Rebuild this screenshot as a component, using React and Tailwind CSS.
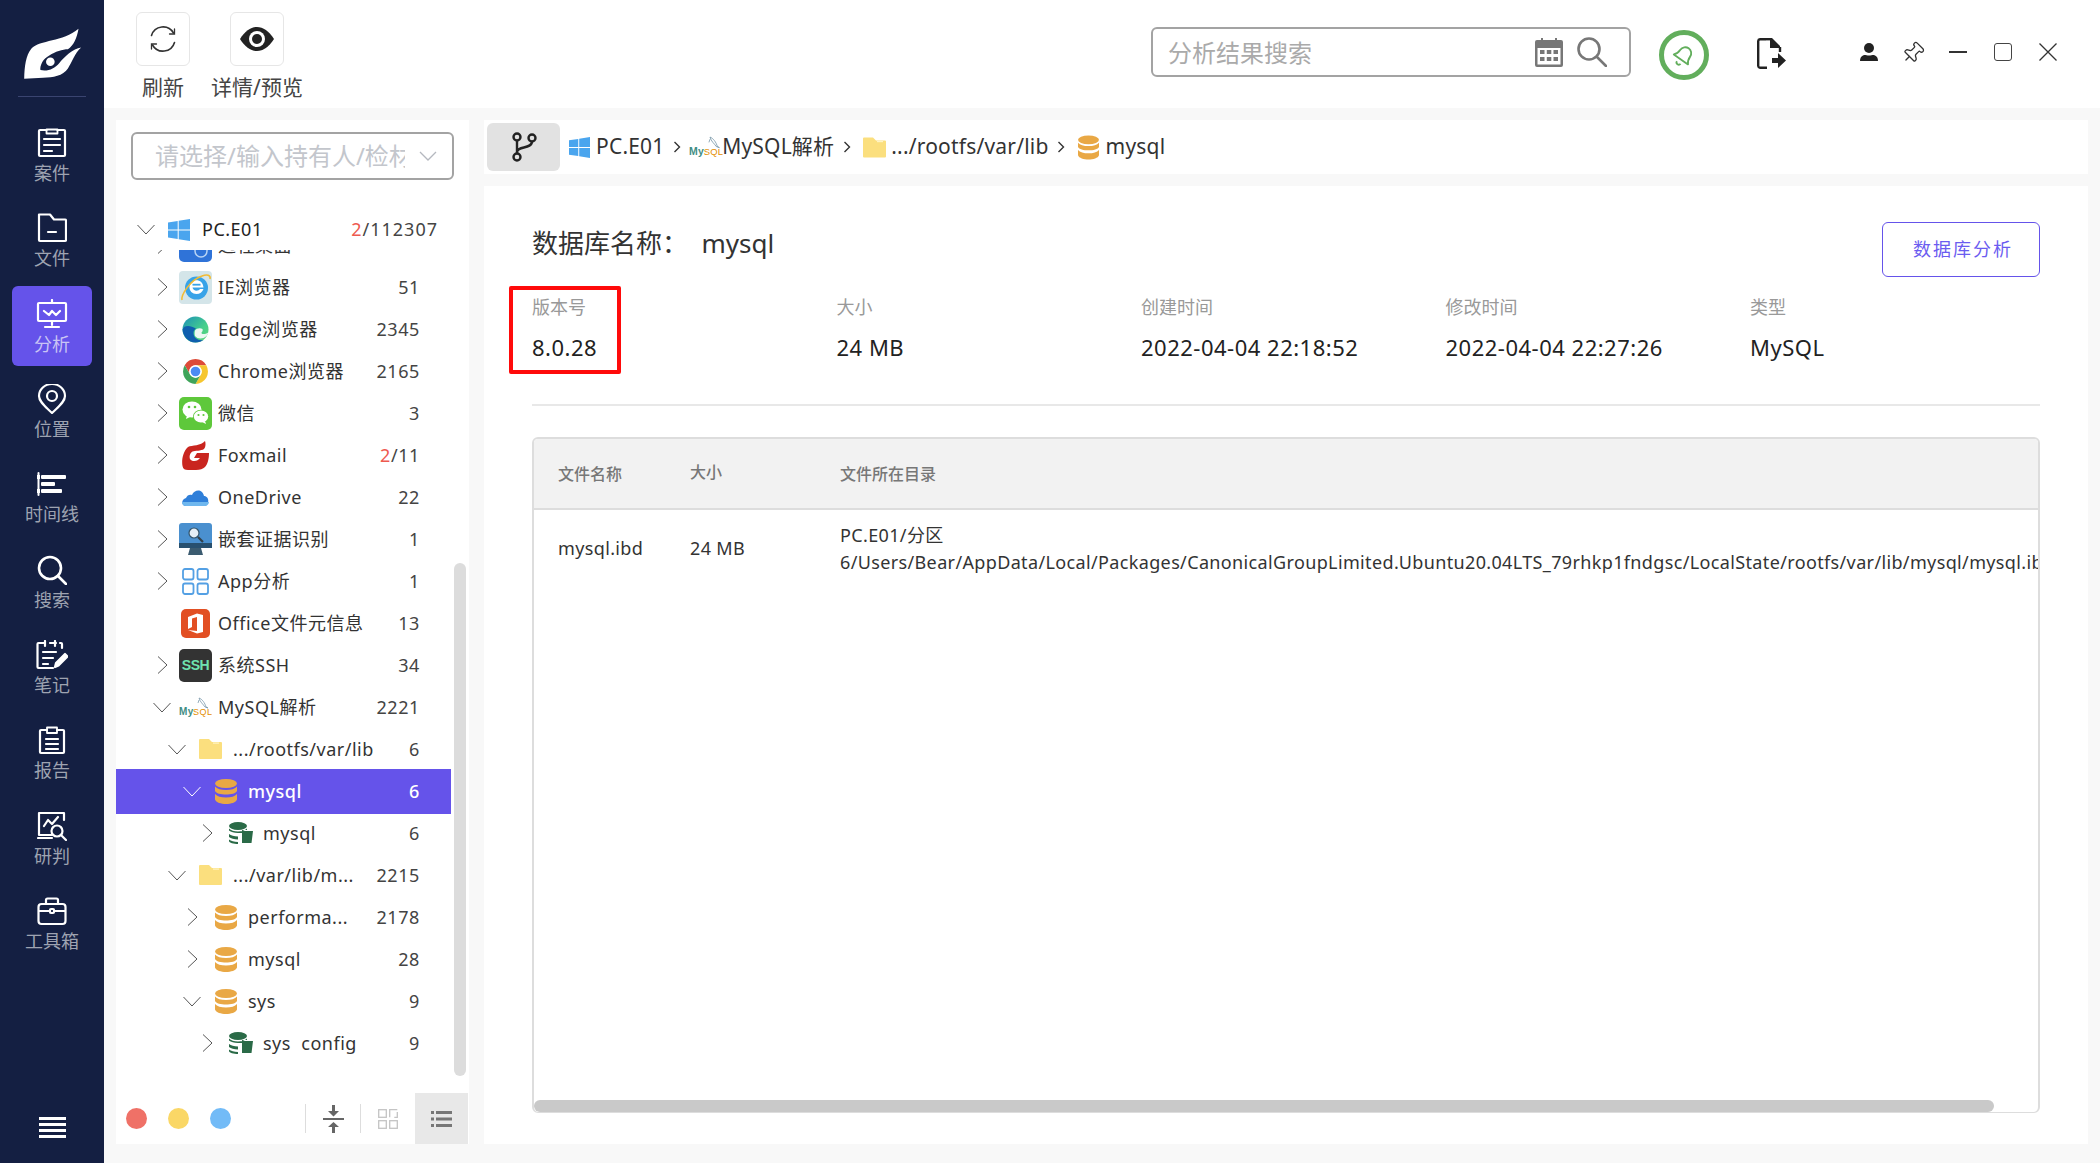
import React from "react";
import { Pin } from "lucide-react";

const FONT = { fontFamily: '"Noto Sans", "Noto Sans CJK SC", sans-serif' };

/* ---------- sidebar icons ---------- */
const S = ({ children, w = 30, h = 30, vb = "0 0 30 30", sw = 2.2 }) => (
  <svg width={w} height={h} viewBox={vb} fill="none" stroke="currentColor" strokeWidth={sw} strokeLinecap="round" strokeLinejoin="round">
    {children}
  </svg>
);
const NavIcons = {
  case: (
    <S>
      <path d="M9.5 2H3a1 1 0 0 0-1 1v24a1 1 0 0 0 1 1h24a1 1 0 0 0 1-1V3a1 1 0 0 0-1-1h-6.500" />
      <path d="M9.500 1.500h11v4h-11z" strokeWidth="1.800" />
      <path d="M7 11h16M7 17h16M7 23h8" />
    </S>
  ),
  file: (
    <S>
      <path d="M2 1.500h11l4 5h11a1 1 0 0 1 1 1V27a1 1 0 0 1-1 1H3a1 1 0 0 1-1-1z" />
      <path d="M11 19h8" />
    </S>
  ),
  analysis: (
    <S w={32}  vb="0 0 32 30">
      <path d="M3 4h26a1 1 0 0 1 1 1v16a1 1 0 0 1-1 1H3a1 1 0 0 1-1-1V5a1 1 0 0 1 1-1z" />
      <path d="M16 1v3M16 22v4M9 28h14M8 12l5 4 3-4 4 4 4-4" />
    </S>
  ),
  pin: (
    <S>
      <path d="M15 29C9 23 2 18 2 12a13 12 0 0 1 26 0c0 6-7 11-13 17z" />
      <circle cx="15" cy="12" r="5" />
    </S>
  ),
  timeline: (
    <svg width="30" height="24" viewBox="0 0 30 24" fill="white">
      <rect x="0.500" y="0" width="2" height="24" rx="1" />
      <rect x="0" y="3" width="3" height="4" />
      <rect x="0" y="17" width="3" height="4" />
      <rect x="4" y="3" width="25" height="4" rx="1" />
      <rect x="4" y="10" width="14" height="4" rx="1" />
      <rect x="4" y="17" width="21" height="4" rx="1" />
    </svg>
  ),
  search: (
    <S sw={2.600}>
      <circle cx="13" cy="13" r="11" />
      <path d="M21 21l8 8" />
    </S>
  ),
  note: (
    <S w={32} vb="0 0 32 30">
      <path d="M8 3H2.500a1 1 0 0 0-1 1v23a1 1 0 0 0 1 1H17M14 3h6M24 3h1a1 1 0 0 1 1 1v4" />
      <path d="M9 1v5M19 1v5M7 12h13M7 18h10M7 24h5" />
      <path d="M19 27l1-4 9-9 2.500 2.500-9 9z" fill="white" />
    </S>
  ),
  report: (
    <S>
      <path d="M10 5H4a1 1 0 0 0-1 1v21a1 1 0 0 0 1 1h22a1 1 0 0 0 1-1V6a1 1 0 0 0-1-1h-6" />
      <path d="M10 2.500h10V8H10z" strokeWidth="1.800" />
      <path d="M9 14h12M9 19h12M9 24h12" />
    </S>
  ),
  judge: (
    <S>
      <path d="M27 9V2H2v22h13" />
      <path d="M1 27h14M7 15l4-6 4 4 6-7" />
      <circle cx="20" cy="20" r="5.500" />
      <path d="M24 24l5 5" />
    </S>
  ),
  tools: (
    <S>
      <rect x="1.500" y="8" width="27" height="20" rx="3" />
      <path d="M9 8V4a1.500 1.500 0 0 1 1.500-1.500h9A1.500 1.500 0 0 1 21 4v4M2 15h11M17 15h11" />
      <rect x="13" y="13" width="4" height="4" rx="1" />
    </S>
  ),
};

const NAV = [
  ["case", "案件"],
  ["file", "文件"],
  ["analysis", "分析", true],
  ["pin", "位置"],
  ["timeline", "时间线"],
  ["search", "搜索"],
  ["note", "笔记"],
  ["report", "报告"],
  ["judge", "研判"],
  ["tools", "工具箱"],
];

function Sidebar() {
  return (
    <div className="w-[104px] shrink-0 bg-[#141f42] flex flex-col items-center">
      <div className="h-[97px] w-[68px] shrink-0 border-b border-[#3a4470] flex items-start justify-center pt-[27px] pl-[2px]">
        <svg width="60" height="53" viewBox="70 80 180 160" fill="white">
          <path d="M73 236C74 200 78 165 95 145C120 118 190 125 237 85C232 115 222 135 205 147C190 147 165 155 150 165C130 175 120 195 122 210C145 215 165 205 178 190C195 170 220 145 245 142C225 160 218 185 205 205C190 228 160 232 130 233Z" />
          <circle cx="152" cy="185" r="13" />
        </svg>
      </div>
      <div className="mt-[18px] flex flex-col gap-[5.330px]">
        {NAV.map(([k, label, active]) => (
          <div
            key={k}
            className={
              active
                ? "w-20 h-20 rounded-md bg-[#6553ea] flex flex-col items-center pt-[13px] text-white"
                : "w-20 h-20 flex flex-col items-center pt-[13px] text-white"
            }
          >
            <div className="h-[30px] flex items-center justify-center">{NavIcons[k]}</div>
            <div className={active ? "mt-[2px] text-[18px] leading-[26px] text-[#c9c4f4]" : "mt-[2px] text-[18px] leading-[26px] text-[#9ea3b1]"}>{label}</div>
          </div>
        ))}
      </div>
      <div className="mt-auto mb-[25px] w-[27px] flex flex-col gap-[3px]">
        <div className="h-[3px] bg-white" />
        <div className="h-[3px] bg-white" />
        <div className="h-[3px] bg-white" />
        <div className="h-[3px] bg-white" />
      </div>
    </div>
  );
}

/* ---------- tree icons ---------- */
const Win = ({ s = 22 }) => (
  <svg width={s} height={s} viewBox="0 0 22 22" fill="#4aa5ee">
    <path d="M0 3.500L9.700 2v8.500H0zM10.700 1.800L22 0v10.500H10.700zM0 11.500h9.700V20L0 18.500zM10.700 11.500H22V22l-11.300-1.800z" />
  </svg>
);
const Folder = ({ w = 23, h = 20 }) => (
  <svg width={w} height={h} viewBox="0 0 23 20">
    <path d="M0 1a1 1 0 0 1 1-1h9l3 3h9a1 1 0 0 1 1 1v15a1 1 0 0 1-1 1H1a1 1 0 0 1-1-1z" fill="#fbdf7e" />
    <path d="M14 3.500h6v1.200h-6z" fill="#fff4c4" />
  </svg>
);
const Db = ({ w = 22, h = 25 }) => (
  <svg width={w} height={h} viewBox="0 0 22 25" fill="#e9a845">
    <ellipse cx="11" cy="4.500" rx="11" ry="4.500" />
    <path d="M0 7.500c2 2.500 6 3.500 11 3.500s9-1 11-3.500V12c-1 2.500-6 3.500-11 3.500S1 14.500 0 12z" />
    <path d="M0 15c2 2.500 6 3.500 11 3.500S20 17.500 22 15v5.500C21 23.500 16 25 11 25S1 23.500 0 20.500z" />
  </svg>
);
const GreenDb = () => (
  <svg width="24" height="22" viewBox="0 0 24 22" fill="#2a6a47">
    <ellipse cx="9" cy="4" rx="9" ry="4" />
    <path d="M0 6.500c2 2 5 3 9 3s7-1 9-3v1.500H13v3H9c-4 0-7-1-9-2.500zM0 12c2 1.500 5 2.500 9 2.500v3c-4 0-7-1-9-2.500zM0 17.500c2 1.500 5 2.500 9 2.500v2c-4 0-9-1-9-3z" />
    <path d="M13 9h11l-1.500 12H13z" />
  </svg>
);
const MySqlLogo = ({ scale = 1 }) => (
  <svg width={33 * scale} height={22 * scale} viewBox="0 0 33 22">
    <text x="0" y="19" fontSize="10" fontWeight="700" fill="#3f8d84" fontFamily="Liberation Sans">My</text>
    <text x="14" y="19" fontSize="9" fill="#e48e00" fontFamily="Liberation Sans">SQL</text>
    <path d="M20 2c3 1 6 5 7 9l2 1-3-1c-2-3-5-5-6-9zM20 4l-1 3" fill="none" stroke="#6a8ca0" strokeWidth="0.700" />
  </svg>
);
const TreeIcons = {
  remote: (
    <svg width="33" height="33" viewBox="0 0 33 33">
      <rect width="33" height="33" rx="5" fill="#2f73d8" />
      <circle cx="22" cy="22" r="6" fill="none" stroke="#b8d4f5" strokeWidth="1.500" />
    </svg>
  ),
  ie: (
    <svg width="33" height="33" viewBox="0 0 33 33">
      <rect width="33" height="33" rx="4" fill="#d4e5e9" />
      <circle cx="17.500" cy="17" r="11.500" fill="#38a3e8" />
      <path d="M10.500 15.500c.5-4 3.500-6.300 7-6.300s6.500 2.300 7 7.300H13.500c.3 2 2 3.200 4 3.200 1.500 0 2.800-.6 3.500-1.700h3.500c-1 3-3.800 5-7 5-4 0-7.500-3-7-7.500z" fill="white" />
      <rect x="13.500" y="12.800" width="8" height="1.800" fill="#38a3e8" />
      <path d="M3 29c-1-5 8-20 20-24 5-2 9-1 8 3" fill="none" stroke="#f2bb33" strokeWidth="1.600" />
    </svg>
  ),
  edge: (
    <svg width="27" height="27" viewBox="0 0 27 27">
      <defs>
        <linearGradient id="eg" x1="0" y1="0" x2="1" y2="1">
          <stop offset="0" stopColor="#1c8fb8" />
          <stop offset="0.600" stopColor="#45cf8c" />
          <stop offset="1" stopColor="#63d678" />
        </linearGradient>
      </defs>
      <circle cx="13.500" cy="13.500" r="13" fill="url(#eg)" />
      <path d="M.5 13.500C1 20 6 26.500 13.500 26.500c3.500 0 6-1 8-2.500-5 1-10-2-10-7 0-2 1-3.500 2.500-4.500C8 9 2 9 .5 13.500z" fill="#0f5fae" />
      <path d="M13 20c2 2.500 5.500 3 8.500 2 2.500-1 4.500-3 5-6-1 1.500-3 2-5 2-1.500 0-2-.5-2-1.500 1-1 1.500-2 1-3.500-2-1.500-6-1-7.500 1.500-.5 2-.5 4 0 5.500z" fill="#eaf7f2" />
    </svg>
  ),
  chrome: (
    <svg width="25" height="25" viewBox="-12.500 -12.500 25 25">
      <path d="M0 -12.500A12.500 12.500 0 0 1 10.800 -6.250L0 -6.250A6.250 6.250 0 0 0 -5.400 3.100L-10.800 -6.250A12.500 12.500 0 0 1 0 -12.500z" fill="#dd4b39" />
      <path d="M10.800 -6.250A12.500 12.500 0 0 1 0 12.500L5.400 3.100A6.250 6.250 0 0 0 0 -6.250z" fill="#f6c62f" />
      <path d="M-10.800 -6.250L-5.400 3.100A6.250 6.250 0 0 0 5.400 3.100L0 12.500A12.500 12.500 0 0 1 -10.800 -6.250z" fill="#3fa45a" />
      <circle r="6.200" fill="white" />
      <circle r="4.800" fill="#4b8bf4" />
    </svg>
  ),
  wechat: (
    <svg width="33" height="33" viewBox="0 0 33 33">
      <rect width="33" height="33" rx="5" fill="#5ec83b" />
      <ellipse cx="13" cy="12.500" rx="9.500" ry="8" fill="white" />
      <path d="M8 18l-1 4 5-2.500z" fill="white" />
      <ellipse cx="22" cy="19.500" rx="8" ry="6.800" fill="#5ec83b" />
      <ellipse cx="22" cy="19.500" rx="7.200" ry="6" fill="white" />
      <path d="M26 24l1 3-4-2z" fill="white" />
      <circle cx="10" cy="10" r="1.300" fill="#5ec83b" />
      <circle cx="16" cy="10" r="1.300" fill="#5ec83b" />
      <circle cx="19.500" cy="18" r="1.100" fill="#5ec83b" />
      <circle cx="24.500" cy="18" r="1.100" fill="#5ec83b" />
    </svg>
  ),
  foxmail: (
    <svg width="27" height="29" viewBox="0 0 27 29">
      <path d="M6 6C10 4 19 5 23 0c1 3 .5 6-1 8-3 2-9 1.500-11.500 2.500C8 12 7 15 8 18c1 2 5 3 8 1l2-2h-6l3-5h12c0 5-1 11-4 14-2 2-5 3-9 3H6c-3 0-5-1-5.500-4-1-5 0-14 5.500-19z" fill="#c9251f" />
    </svg>
  ),
  onedrive: (
    <svg width="27" height="18" viewBox="0 0 27 18">
      <path d="M4 18c-5 0-5-7 0-8 1-3 4-4 6-3 2-5 10-7 12 1 5 0 6 8 1 10z" fill="#2f7fd9" />
      <path d="M4 18c-3 0-4-2-4-4h27c0 2-2 4-4 4z" fill="#6fb7ee" />
    </svg>
  ),
  nested: (
    <svg width="33" height="33" viewBox="0 0 33 33">
      <rect x="0" y="0" width="33" height="25" rx="3" fill="#4a90cf" />
      <rect x="0" y="20" width="33" height="5" fill="#28506f" />
      <path d="M11 25h11l2 7H9z" fill="#3b5b70" />
      <circle cx="15" cy="10" r="5" fill="#e4eef6" stroke="#33546b" strokeWidth="1.200" />
      <path d="M19 14l5 5" stroke="#33404a" strokeWidth="2.200" />
    </svg>
  ),
  app: (
    <svg width="27" height="27" viewBox="0 0 27 27" fill="none" stroke="#54a0e4" strokeWidth="1.800">
      <rect x="1" y="1" width="10.500" height="10.500" rx="2" />
      <rect x="15.500" y="1" width="10.500" height="10.500" rx="2" />
      <rect x="1" y="15.500" width="10.500" height="10.500" rx="2" />
      <rect x="15.500" y="15.500" width="10.500" height="10.500" rx="2" />
    </svg>
  ),
  office: (
    <svg width="29" height="29" viewBox="0 0 29 29">
      <rect width="29" height="29" rx="5" fill="#e24f23" />
      <path d="M7 8l9-3.500 6 1.500v17l-6 1.500L7 21l9 1V8l-5 1.500v8.500L7 20z" fill="white" />
    </svg>
  ),
  ssh: (
    <div className="w-[33px] h-[33px] rounded-[5px] bg-[#333] flex items-center justify-center text-[14px] font-bold leading-none tracking-[-0.400px] text-[#6fe3b0]" style={{ fontFamily: "Liberation Sans" }}>
      SSH
    </div>
  ),
  mysqlLogo: <MySqlLogo />,
  folder: <Folder />,
  db: <Db />,
  gdb: <GreenDb />,
};

const Chev = ({ dir, light }) =>
  dir === "none" ? (
    <span className="w-5" />
  ) : (
    <span className={light ? "w-5 flex justify-center items-center text-white" : "w-5 flex justify-center items-center text-[#555]"}>
      {dir === "right" ? (
        <svg width="11" height="18" viewBox="0 0 11 18" fill="none" stroke="currentColor" strokeWidth="1"><path d="M1 .5l9 8.500-9 8.500" /></svg>
      ) : (
        <svg width="18" height="11" viewBox="0 0 18 11" fill="none" stroke="currentColor" strokeWidth="1"><path d="M.5 1L9 10l8.500-9" /></svg>
      )}
    </span>
  );

const LV = { 1: "pl-[36px]", 2: "pl-[51px]", 3: "pl-[66px]", 4: "pl-[81px]" };

const ROWS = [
  [1, "right", "remote", "远程桌面", ""],
  [1, "right", "ie", "IE浏览器", "51"],
  [1, "right", "edge", "Edge浏览器", "2345"],
  [1, "right", "chrome", "Chrome浏览器", "2165"],
  [1, "right", "wechat", "微信", "3"],
  [1, "right", "foxmail", "Foxmail", "2/11", true],
  [1, "right", "onedrive", "OneDrive", "22"],
  [1, "right", "nested", "嵌套证据识别", "1"],
  [1, "right", "app", "App分析", "1"],
  [1, "none", "office", "Office文件元信息", "13"],
  [1, "right", "ssh", "系统SSH", "34"],
  [1, "down", "mysqlLogo", "MySQL解析", "2221"],
  [2, "down", "folder", ".../rootfs/var/lib", "6"],
  [3, "down", "db", "mysql", "6", false, true],
  [4, "right", "gdb", "mysql", "6"],
  [2, "down", "folder", ".../var/lib/m...", "2215"],
  [3, "right", "db", "performa...", "2178"],
  [3, "right", "db", "mysql", "28"],
  [3, "down", "db", "sys", "9"],
  [4, "right", "gdb", "sys  config", "9"],
];

function Row({ lv, dir, icon, label, count, red, active }) {
  const base = `flex items-center pr-[31px] text-[18px] tracking-[0.500px] whitespace-pre ${LV[lv]}`;
  return (
    <div className={active ? `${base} h-[45px] -my-[1.500px] relative bg-[#6553ea] text-white font-medium` : `${base} h-[42px] text-[#333]`}>
      <Chev dir={dir} light={active} />
      <span className="ml-[7px] w-[33px] flex items-center justify-center">{TreeIcons[icon]}</span>
      <span className="ml-[6px] flex-1">{label}</span>
      <span className={active ? "text-white tracking-[0.600px]" : "text-[#444] tracking-[0.600px]"}>
        {red ? (
          <>
            <span className="text-[#ee5a50]">2</span>/11
          </>
        ) : (
          count
        )}
      </span>
    </div>
  );
}

function LeftPanel() {
  return (
    <div className="w-[353px] shrink-0 bg-white flex flex-col">
      <div className="mt-3 mx-[15px] h-12 border-2 border-[#a3a3a3] rounded-md flex items-center pl-[22px] pr-[15px] shrink-0">
        <span className="flex-1 overflow-hidden whitespace-nowrap text-[24px] text-[#c3c6cc]">请选择/输入持有人/检材</span>
        <svg className="ml-[14px] shrink-0" width="18" height="10" viewBox="0 0 18 10" fill="none" stroke="#b5b8bf" strokeWidth="1.300"><path d="M1 1l8 8 8-8" /></svg>
      </div>
      <div className="mt-[29px] h-[41px] shrink-0 flex items-center pl-[20px] pr-[31px] text-[18px] tracking-[0.500px] text-[#222]">
        <Chev dir="down" />
        <span className="ml-3 mr-3"><Win /></span>
        <span className="flex-1">PC.E01</span>
        <span className="text-[#444] tracking-[1px]"><span className="text-[#ee5a50]">2</span>/112307</span>
      </div>
      <div className="relative flex-1 overflow-hidden">
        <div className="-mt-[26px] w-[335px]">
          {ROWS.map((r, i) => (
            <Row key={i} lv={r[0]} dir={r[1]} icon={r[2]} label={r[3]} count={r[4]} red={r[5]} active={r[6]} />
          ))}
        </div>
        <div className="absolute left-[338px] top-[313px] w-3 h-[513px] rounded-md bg-[#dcdcdc]" />
      </div>
      <div className="h-[51px] shrink-0 flex items-center pl-[10px]">
        <span className="w-[21px] h-[21px] rounded-full bg-[#ef7167]" />
        <span className="ml-[21px] w-[21px] h-[21px] rounded-full bg-[#fad766]" />
        <span className="ml-[21px] w-[21px] h-[21px] rounded-full bg-[#72bbf7]" />
        <span className="ml-[74px] w-px h-[29px] bg-[#ddd]" />
        <span className="w-[54px] flex justify-center">
          <svg width="21" height="28" viewBox="0 0 21 28" fill="#666">
            <path d="M9 0h3v6h4l-5.500 5.500L5 6h4zM0 13h21v2H0zM10.500 17L16 22h-4v6H9v-6H5z" />
          </svg>
        </span>
        <span className="w-px h-[29px] bg-[#ddd]" />
        <span className="w-[54px] flex justify-center">
          <svg width="20" height="20" viewBox="0 0 20 20" fill="none" stroke="#c4c4c4" strokeWidth="1.300">
            <rect x=".7" y=".7" width="7.600" height="7.600" />
            <path d="M11.700 8.300V.7h7.600M19.300 3v5.300h-3" />
            <rect x=".7" y="11.700" width="7.600" height="7.600" />
            <rect x="11.700" y="11.700" width="7.600" height="7.600" />
          </svg>
        </span>
        <span className="ml-auto w-[53px] h-[51px] mr-px bg-[#e8e8e8] flex items-center justify-center">
          <svg width="21" height="16" viewBox="0 0 21 16" fill="#777">
            <path d="M0 0h3v3H0zM5 0h16v3H5zM0 6.500h3v3H0zM5 6.500h16v3H5zM0 13h3v3H0zM5 13h16v3H5z" />
          </svg>
        </span>
      </div>
    </div>
  );
}

/* ---------- top bar ---------- */
function TopBar() {
  return (
    <div className="h-[108px] shrink-0 bg-white flex items-start">
      <div className="ml-[24px] w-[70px] flex flex-col items-center pt-3">
        <div className="w-[54px] h-[54px] border border-[#e6e6e6] rounded-md flex items-center justify-center">
          <svg width="28" height="28" viewBox="0 0 28 28" fill="none" stroke="#333" strokeWidth="1.600" strokeLinecap="round">
            <path d="M2.500 10.500A12 12 0 0 1 24.500 8" />
            <path d="M25.500 17.500A12 12 0 0 1 3.500 20" />
            <path d="M25.500 4v5h-5M2.500 24v-5h5" strokeWidth="1.300" />
          </svg>
        </div>
        <div className="mt-[6px] text-[21px] leading-[30px] text-[#444]">刷新</div>
      </div>
      <div className="ml-[12px] w-[94px] flex flex-col items-center pt-3">
        <div className="w-[54px] h-[54px] border border-[#e6e6e6] rounded-md flex items-center justify-center">
          <svg width="34" height="24" viewBox="0 0 34 24">
            <path d="M0 12C5 4 11 0 17 0s12 4 17 12c-5 8-11 12-17 12S5 20 0 12z" fill="#222" />
            <circle cx="17" cy="12" r="8" fill="white" />
            <circle cx="17" cy="12" r="5" fill="#222" />
          </svg>
        </div>
        <div className="mt-[6px] text-[21px] leading-[30px] text-[#444] whitespace-nowrap">详情/预览</div>
      </div>
      <div className="ml-[847px] mt-[27px] w-[480px] h-[50px] border-2 border-[#a3a3a3] rounded-md flex items-center pl-[15px]">
        <span className="flex-1 pt-[2px] text-[24px] text-[#aaa]">分析结果搜索</span>
        <svg width="30" height="29" viewBox="0 0 30 29" fill="#777">
          <path d="M1 4a2 2 0 0 1 2-2h4V0h2v2h12V0h2v2h4a2 2 0 0 1 2 2v23a2 2 0 0 1-2 2H3a2 2 0 0 1-2-2zM3.500 10v16.500h23V10z" />
          <path d="M6 12h4.500v4H6zM12.800 12h4.500v4h-4.500zM19.500 12H24v4h-4.500zM6 19h4.500v4H6zM12.800 19h4.500v4h-4.500zM19.500 19H24v4h-4.500z" />
        </svg>
        <svg className="ml-[13px]" width="30" height="30" viewBox="0 0 30 30" fill="none" stroke="#777" strokeWidth="2.600" strokeLinecap="round">
          <circle cx="12" cy="12" r="10.500" />
          <path d="M20 20l9 9" />
        </svg>
        <span className="w-[22px]" />
      </div>
      <div className="ml-[28px] mt-[30px] w-[50px] h-[50px] rounded-full border-[5px] border-[#62ae5c] flex items-center justify-center">
        <svg className="rotate-[35deg]" width="26" height="26" viewBox="0 0 24 24" fill="none" stroke="#62ae5c" strokeWidth="1.700" strokeLinejoin="round">
          <path d="M4 17c2-2 2.500-4 2.500-7a5.500 5.500 0 0 1 11 0c0 3 .5 5 2.500 7z" />
          <path d="M10 20.500a2 2 0 0 0 4 0" />
        </svg>
      </div>
      <div className="ml-[48px] mt-[38px]">
        <svg width="29" height="31" viewBox="0 0 29 31">
          <path d="M9 1.200H3A2 2 0 0 0 1.200 3v25A2 2 0 0 0 3 29.800h7M23 14V9" fill="none" stroke="#222" strokeWidth="2.400" />
          <path d="M13 0h2l8 8v2h-10z" fill="#222" />
          <path d="M15 20h6v-5l8 7.500-8 7.500v-5h-6z" fill="#222" />
          <path d="M9 1.200h5" stroke="#222" strokeWidth="2.400" />
        </svg>
      </div>
      <div className="ml-[74px] mt-[43px]">
        <svg width="18" height="18" viewBox="0 0 18 18" fill="#222">
          <circle cx="9" cy="5" r="5" />
          <path d="M0 18c0-3 1-5 4-6 1-.4 3 .6 5 .6s4-1 5-.6c3 1 4 3 4 6z" />
        </svg>
      </div>
      <div className="ml-[23px] mt-[41px]">
        <Pin className="rotate-45 text-[#333]" size={24} strokeWidth={1.300} />
      </div>
      <div className="ml-[24px] mt-[51px] w-[18px] h-[2px] bg-[#333]" />
      <div className="ml-[27px] mt-[43px] w-[18px] h-[18px] rounded-[3px] border border-[#444]" />
      <div className="ml-[27px] mt-[43px]">
        <svg width="18" height="18" viewBox="0 0 18 18" stroke="#333" strokeWidth="1.300"><path d="M.5.5l17 17M17.500.5l-17 17" /></svg>
      </div>
    </div>
  );
}

/* ---------- main ---------- */
const Sep = () => (
  <svg width="8" height="12" viewBox="0 0 8 12" fill="none" stroke="#333" strokeWidth="1.400"><path d="M1.500 1l5 5-5 5" /></svg>
);

function Crumbs() {
  return (
    <div className="h-[54px] shrink-0 bg-white flex items-center pl-[3px] text-[21px] tracking-[0.200px] text-[#333] whitespace-nowrap">
      <div className="w-[73px] h-12 rounded-md bg-[#e2e2e2] flex items-center justify-center">
        <svg width="26" height="30" viewBox="0 0 26 30" fill="none" stroke="#222" strokeWidth="2.400">
          <circle cx="6" cy="5" r="3.500" />
          <circle cx="6" cy="25" r="3.500" />
          <circle cx="21" cy="6" r="3.500" />
          <path d="M6 8.500v13M6 20c0-6 15-3 15-10.500" />
        </svg>
      </div>
      <span className="ml-[9px]"><Win s={21} /></span>
      <span className="ml-[6px]">PC.E01</span>
      <span className="ml-[8px]"><Sep /></span>
      <span className="ml-[8px]"><MySqlLogo scale={1.050} /></span>
      <span className="-ml-[1px]">MySQL解析</span>
      <span className="ml-[9px]"><Sep /></span>
      <span className="ml-[12px]"><Folder w={23} h={21} /></span>
      <span className="ml-[5px]">.../rootfs/var/lib</span>
      <span className="ml-[8px]"><Sep /></span>
      <span className="ml-[13px]"><Db w={21} h={25} /></span>
      <span className="ml-[7px]">mysql</span>
    </div>
  );
}

const INFO = [
  ["版本号", "8.0.28"],
  ["大小", "24 MB"],
  ["创建时间", "2022-04-04 22:18:52"],
  ["修改时间", "2022-04-04 22:27:26"],
  ["类型", "MySQL"],
];

function MainPanel() {
  return (
    <div className="relative mt-3 flex-1 bg-white flex flex-col px-12 pt-9 pb-[31px]">
      <div className="flex items-start justify-between shrink-0">
        <div className="mt-[3px] text-[26px] leading-9 text-[#333] whitespace-pre">数据库名称：  mysql</div>
        <div className="w-[158px] h-[55px] border border-[#6553ea] rounded-md flex items-center justify-center pl-1 text-[18px] tracking-[2px] text-[#6b5cf0]">数据库分析</div>
      </div>
      <div className="mt-[17px] grid grid-cols-[repeat(5,304.5px)] shrink-0">
        {INFO.map(([k, v]) => (
          <div key={k}>
            <div className="text-[18px] leading-[26px] text-[#999]">{k}</div>
            <div className="mt-3 text-[22px] leading-[30px] text-[#222] tracking-[0.500px] whitespace-nowrap">{v}</div>
          </div>
        ))}
      </div>
      <div className="mt-[42px] h-[2px] shrink-0 bg-[#e8e8e8]" />
      <div className="relative mt-[31px] flex-1 border-x-2 border-t-2 border-b border-[#dddddd] rounded-md overflow-hidden">
        <div className="h-[71px] border-b-2 border-[#dddddd] bg-[#f2f2f2] flex items-center text-[16px] text-[#777] font-medium">
          <div className="pl-6 w-[156px] shrink-0">文件名称</div>
          <div className="w-[150px] shrink-0 -mt-[3px]">大小</div>
          <div>文件所在目录</div>
        </div>
        <div className="flex items-center pt-[12px] text-[18px] leading-[27px] tracking-[0.360px] text-[#333] whitespace-nowrap">
          <div className="pl-6 w-[156px] shrink-0 -mt-[2px]">mysql.ibd</div>
          <div className="w-[150px] shrink-0 -mt-[2px]">24 MB</div>
          <div>
            PC.E01/分区
            <br />
            6/Users/Bear/AppData/Local/Packages/CanonicalGroupLimited.Ubuntu20.04LTS_79rhkp1fndgsc/LocalState/rootfs/var/lib/mysql/mysql.ibd
          </div>
        </div>
        <div className="absolute left-0 bottom-0 w-[1460px] h-3 rounded-md bg-[#c9c9c9]" />
      </div>
      <div className="absolute left-[25px] top-[100px] w-[112px] h-[88px] border-4 border-[#ff0a0a] rounded-[2px]" />
    </div>
  );
}

export default function App() {
  return (
    <div className="w-[2100px] h-[1163px] flex overflow-hidden bg-[#f8f8f8]" style={FONT}>
      <Sidebar />
      <div className="flex-1 flex flex-col min-w-0">
        <TopBar />
        <div className="flex-1 flex min-h-0 pt-3 pb-[19px] pl-3">
          <LeftPanel />
          <div className="ml-[15px] w-[1604px] flex flex-col">
            <Crumbs />
            <MainPanel />
          </div>
        </div>
      </div>
    </div>
  );
}
